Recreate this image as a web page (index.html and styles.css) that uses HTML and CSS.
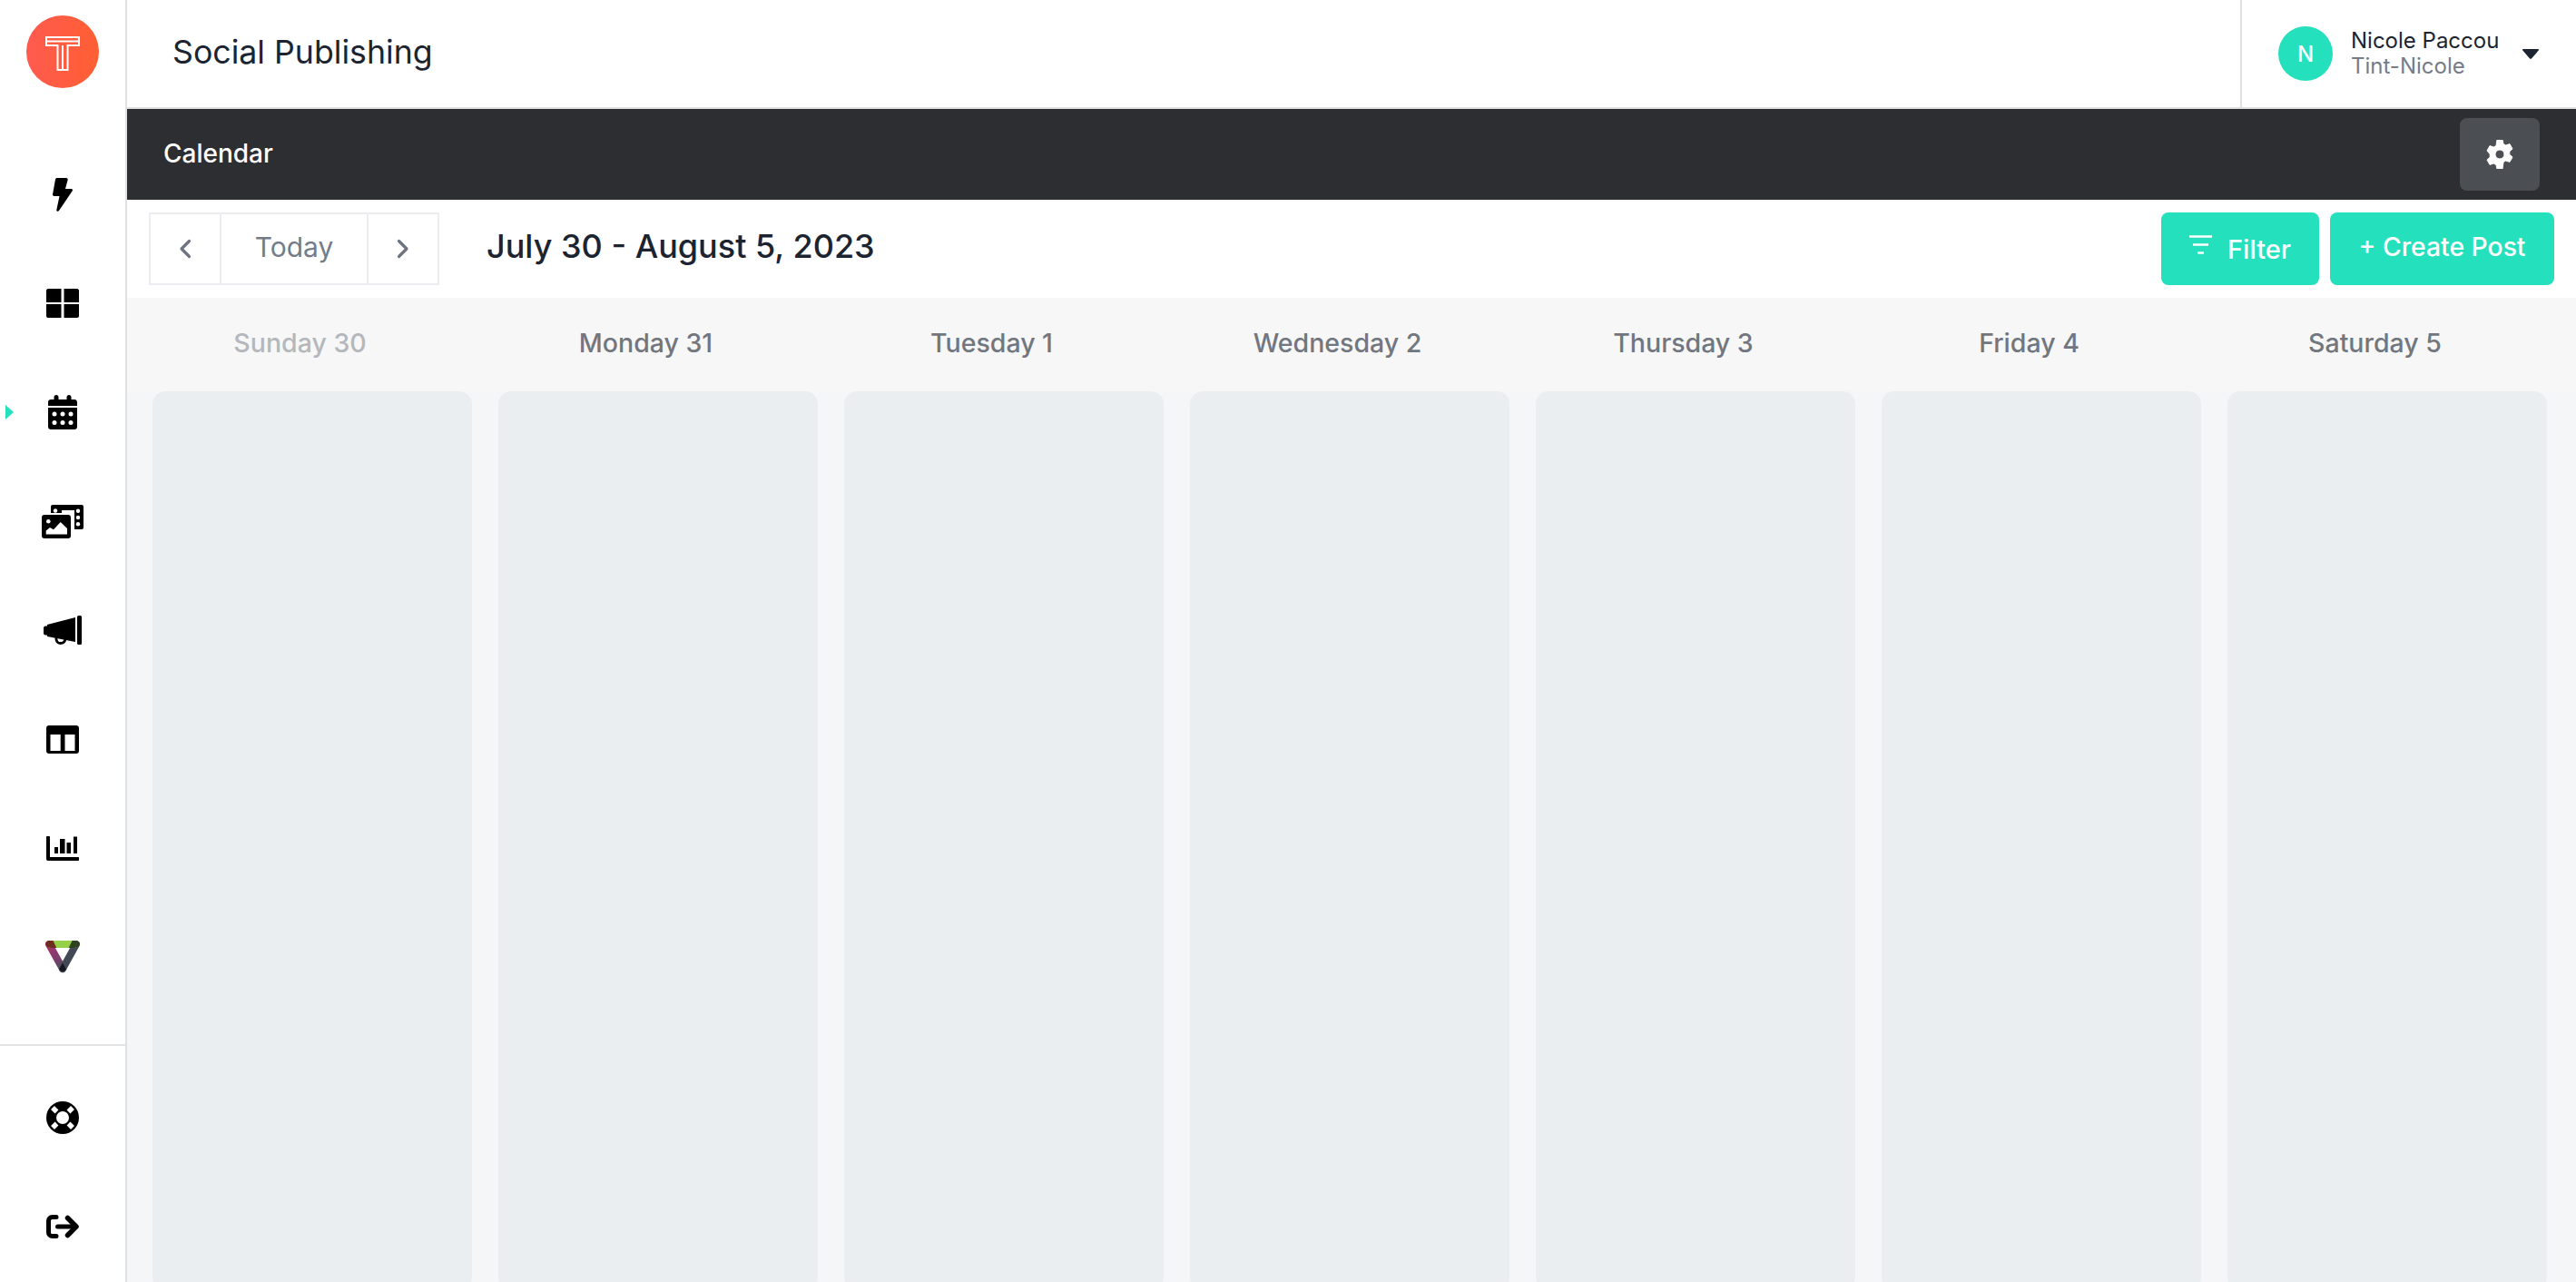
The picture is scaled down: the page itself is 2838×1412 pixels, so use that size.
FILE: index.html
```html
<!DOCTYPE html>
<html lang="en">
<head>
<meta charset="utf-8">
<title>Social Publishing</title>
<link rel="stylesheet" href="styles.css">
</head>
<body>
<div class="app">
  <aside class="sidebar">
    <div class="logo-wrap">
      <svg class="logo" viewBox="0 0 80 80" width="80" height="80">
        <defs><linearGradient id="lg" x1="0" y1="0" x2="1" y2="0"><stop offset="0" stop-color="#ff5a50"/><stop offset="1" stop-color="#ff5f33"/></linearGradient></defs>
        <circle cx="40" cy="40" r="40" fill="url(#lg)"/>
        <path d="M22 24h36v9H45.500v27h-11V33H22z" fill="none" stroke="#fff" stroke-width="2"/>
        <path d="M22 28.500h36M40 33v27" fill="none" stroke="#fff" stroke-width="2"/>
      </svg>
    </div>
    <nav class="nav">
      <a class="nav-item"><svg width="22" height="37" viewBox="0 0 22 37"><path d="M5 0h10c1 0 2 1 1.600 2.200L14 12h6.500c1.200 0 1.800 1.200 1.200 2.200L7 36c-.7 1.300-3 .8-2.700-.8L7.500 20H1.600C.6 20-.1 19.200 0 18.200L3 1.500C3.200.6 4 0 5 0z" fill="#000"/></svg></a>
      <a class="nav-item"><svg width="36" height="32" viewBox="0 0 36 32"><path d="M2 0h14.500v15H0V2C0 1 1 0 2 0zM19.500 0H34c1 0 2 1 2 2v13H19.500zM0 17h16.500v15H2c-1 0-2-1-2-2zM19.500 17H36v13c0 1-1 2-2 2H19.500z" fill="#000"/></svg></a>
      <a class="nav-item active"><svg width="32" height="38" viewBox="0 0 32 38"><path d="M9 0c1.500 0 2.500 1 2.500 2.500V5h9V2.500C20.500 1 21.500 0 23 0s2.500 1 2.500 2.500V5H29c1.700 0 3 1.300 3 3v4H0V8c0-1.700 1.300-3 3-3h3.500V2.500C6.500 1 7.500 0 9 0z" fill="#000"/><path d="M0 14h32v21c0 1.700-1.300 3-3 3H3c-1.700 0-3-1.300-3-3z" fill="#000"/><g fill="#fff"><circle cx="7" cy="21" r="2.500"/><circle cx="16" cy="21" r="2.500"/><circle cx="25" cy="21" r="2.500"/><circle cx="7" cy="30.500" r="2.500"/><circle cx="16" cy="30.500" r="2.500"/><circle cx="25" cy="30.500" r="2.500"/></g></svg></a>
      <a class="nav-item"><svg width="46" height="37" viewBox="0 0 46 37"><path d="M12 0h32a2 2 0 0 1 2 2v23a2 2 0 0 1-2 2h-8V6H22v3H10V2a2 2 0 0 1 2-2z" fill="#000"/><g fill="#fff"><circle cx="15" cy="6.500" r="2.200"/><circle cx="40" cy="6.700" r="2.200"/><circle cx="40" cy="14" r="2.200"/><circle cx="40" cy="21.300" r="2.200"/></g><rect x="0" y="11" width="32" height="26" rx="3" fill="#000"/><circle cx="7.300" cy="18.300" r="2.300" fill="#fff"/><path d="M4.700 32.500V28.500L9 25l4 2.200L20.700 19l7.300 7v6.500z" fill="#fff"/></svg></a>
      <a class="nav-item"><svg width="42" height="32" viewBox="0 0 42 32"><rect x="37" y="0" width="5" height="32" rx="1.500" fill="#000"/><path d="M35 2v27L4 23v-1.500H2c-1 0-2-1-2-2v-6c0-1 1-2 2-2h2V10z" fill="#000"/><path d="M14 23.500c-.6 4.500 1.400 7 4.500 7s5-2 5.500-4.500" fill="none" stroke="#000" stroke-width="2.800"/></svg></a>
      <a class="nav-item"><svg width="36" height="31" viewBox="0 0 36 31"><path fill-rule="evenodd" d="M3 0h30c1.700 0 3 1.300 3 3v25c0 1.700-1.300 3-3 3H3c-1.700 0-3-1.300-3-3V3c0-1.700 1.300-3 3-3zM4.500 10v18h11.200V10zM20.500 10v18h11V10z" fill="#000"/></svg></a>
      <a class="nav-item"><svg width="36" height="27" viewBox="0 0 36 27"><path d="M0 1c0-.6.400-1 1-1h2c.6 0 1 .4 1 1v22h31c.6 0 1 .4 1 1v2c0 .6-.4 1-1 1H2c-1.100 0-2-.9-2-2zM9 12h4v7H9zM15 3h5.500v16H15zM22.500 7H27v12h-4.500zM30 .5h4V19h-4z" fill="#000"/></svg></a>
      <a class="nav-item"><svg width="38" height="36" viewBox="0 0 38 36">
        <defs><linearGradient id="vl" gradientUnits="userSpaceOnUse" x1="4" y1="4" x2="19" y2="31"><stop offset="0" stop-color="#a8336f"/><stop offset=".6" stop-color="#7a3d6c"/><stop offset="1" stop-color="#4a5060"/></linearGradient></defs>
        <path d="M4 4L19 31" fill="none" stroke="url(#vl)" stroke-width="8" stroke-linecap="round"/>
        <path d="M34 4L19 31" fill="none" stroke="#434855" stroke-width="8" stroke-linecap="round"/>
        <path d="M4 4H34" fill="none" stroke="#96d048" stroke-width="8"/>
        <path d="M4 0h4.500l3.800 8H5.500l-4-1.500C-.8 4.500 1 0 4 0z" fill="#6d2d1e"/>
        <path d="M34 0h-4.500l-3.800 8h6.800l4-1.500C38.800 4.500 37 0 34 0z" fill="#2e4220"/>
        <path d="M19 24.500l-3.800 7a4.200 4.200 0 0 0 7.600 0z" fill="#14171d"/>
      </svg></a>
    </nav>
    <div class="side-foot">
      <a class="nav-item"><svg width="36" height="36" viewBox="0 0 36 36"><circle cx="18" cy="18" r="18" fill="#000"/><circle cx="18" cy="18" r="7" fill="#fff"/><g stroke="#fff" stroke-width="5.500"><path d="M7 7l4.500 4.500M29 7l-4.500 4.500M7 29l4.500-4.500M29 29l-4.500-4.500"/></g></svg></a>
      <a class="nav-item"><svg width="36" height="26" viewBox="0 0 36 26"><path d="M11 2.500H6.500a4 4 0 0 0-4 4v13a4 4 0 0 0 4 4H11" fill="none" stroke="#000" stroke-width="5" stroke-linecap="round"/><path d="M12.500 13H31" fill="none" stroke="#000" stroke-width="5" stroke-linecap="round"/><path d="M23.500 3.500L33 13l-9.500 9.500" fill="none" stroke="#000" stroke-width="5.500" stroke-linecap="round" stroke-linejoin="round"/></svg></a>
    </div>
  </aside>
  <main class="main">
    <header class="topbar">
      <h1 class="app-title">Social Publishing</h1>
      <div class="user">
        <span class="avatar">N</span>
        <div class="user-text">
          <span class="user-name">Nicole Paccou</span>
          <span class="user-org">Tint-Nicole</span>
        </div>
        <svg class="caret" width="18" height="11" viewBox="0 0 18 11"><path d="M1 0h16c.9 0 1.300 1 .7 1.600L10 10.400c-.5.600-1.500.600-2 0L.3 1.600C-.3 1 .1 0 1 0z" fill="#1b2430"/></svg>
      </div>
    </header>
    <div class="subbar">
      <span class="subbar-title">Calendar</span>
      <button class="gear-btn"><svg width="30" height="32" viewBox="0 0 30 32"><path fill-rule="evenodd" d="M12 0h6l1 4.500c1 .4 1.900.9 2.700 1.500L26 4.600l3 5.300-3.300 3c.2 1 .2 2.200 0 3.200l3.300 3-3 5.300-4.300-1.400c-.8.600-1.700 1.100-2.700 1.500L18 32h-6l-1-4.500c-1-.4-1.900-.9-2.700-1.500L4 27.400l-3-5.300 3.300-3c-.2-1-.2-2.200 0-3.200L1 12 4 6.600l4.300 1.400c.8-.6 1.700-1.100 2.700-1.500zM15 11a5 5 0 1 0 0 10 5 5 0 0 0 0-10z" fill="#fff" stroke="#fff" stroke-width="1" stroke-linejoin="round"/></svg></button>
    </div>
    <div class="toolbar">
      <div class="pager">
        <button class="pager-arrow"><svg width="14" height="22" viewBox="0 0 14 22"><path d="M11.500 2.500L3 11l8.500 8.500" fill="none" stroke="#6d7480" stroke-width="3.200" stroke-linecap="round" stroke-linejoin="round"/></svg></button>
        <button class="pager-today">Today</button>
        <button class="pager-arrow"><svg width="14" height="22" viewBox="0 0 14 22"><path d="M2.500 2.500L11 11l-8.500 8.500" fill="none" stroke="#6d7480" stroke-width="3.200" stroke-linecap="round" stroke-linejoin="round"/></svg></button>
      </div>
      <h2 class="range">July 30 - August 5, 2023</h2>
      <div class="actions">
        <button class="btn btn-filter"><svg class="filter-icon" width="26" height="22" viewBox="0 0 26 22"><path d="M0 1.500h25M4 10.500h17M9 19.500h7" stroke="#fff" stroke-width="2.500" fill="none"/></svg><span>Filter</span></button>
        <button class="btn btn-create">+ Create Post</button>
      </div>
    </div>
    <section class="calendar">
      <div class="day-heads">
        <div class="day-head past">Sunday 30</div>
        <div class="day-head">Monday 31</div>
        <div class="day-head">Tuesday 1</div>
        <div class="day-head">Wednesday 2</div>
        <div class="day-head">Thursday 3</div>
        <div class="day-head">Friday 4</div>
        <div class="day-head">Saturday 5</div>
      </div>
      <div class="day-cols">
        <div class="day-col"></div><div class="day-col"></div><div class="day-col"></div><div class="day-col"></div><div class="day-col"></div><div class="day-col"></div><div class="day-col"></div>
      </div>
    </section>
  </main>
</div>
</body>
</html>
```

FILE: styles.css
```css
* { box-sizing: border-box; }
html, body { margin: 0; height: 100%; overflow: hidden; }
body { font-family: Inter, "Noto Sans", sans-serif; color: #1b2430; background: #fff; }
button { font: inherit; border: 0; padding: 0; cursor: pointer; }
.app { display: flex; width: 2838px; height: 1412px; overflow: hidden; }

.sidebar { width: 140px; flex: none; border-right: 2px solid #dfe0e2; display: flex; flex-direction: column; background: #fff; }
.logo-wrap { height: 154px; padding-top: 17px; display: flex; justify-content: center; }
.logo { display: block; }
.nav { display: flex; flex-direction: column; height: 998px; border-bottom: 2px solid #e2e3e5; }
.nav-item { height: 120px; flex: none; display: flex; align-items: center; justify-content: center; position: relative; }
.nav-item.active::before { content: ""; position: absolute; left: 6px; top: 52px; border-left: 9px solid #25e0bd; border-top: 8px solid transparent; border-bottom: 8px solid transparent; }
.side-foot { display: flex; flex-direction: column; padding-top: 19px; }

.main { flex: 1; min-width: 0; display: flex; flex-direction: column; }
.topbar { height: 120px; flex: none; border-bottom: 2px solid #dfe0e2; display: flex; align-items: stretch; justify-content: space-between; padding-left: 50px; }
.app-title { margin: 0; align-self: center; font-size: 35.7px; font-weight: 400; color: #1b2430; padding-bottom: 4px; }
.user { width: 370px; border-left: 2px solid #dfe0e2; display: flex; align-items: center; padding-left: 40px; }
.avatar { width: 60px; height: 60px; border-radius: 50%; background: #25e0bd; color: #fff; font-size: 24px; font-weight: 500; display: flex; align-items: center; justify-content: center; flex: none; }
.user-text { margin-left: 20px; display: flex; flex-direction: column; width: 189px; line-height: 28px; }
.user-name { font-size: 24px; color: #1b2430; }
.user-org { font-size: 24px; color: #767c87; }
.caret { flex: none; }

.subbar { height: 100px; flex: none; background: #2d2e32; display: flex; align-items: center; justify-content: space-between; padding: 0 40px 0 40px; }
.subbar-title { color: #fff; font-size: 28px; font-weight: 500; padding-bottom: 3px; }
.gear-btn { width: 88px; height: 80px; border-radius: 8px; background: #4b4e52; display: flex; align-items: center; justify-content: center; }

.toolbar { height: 108px; flex: none; display: flex; align-items: flex-start; padding: 14px 24px 0; background: #fff; }
.pager { display: flex; height: 80px; border: 2px solid #ebedf1; background: #fff; }
.pager-arrow { width: 76px; background: #fff; display: flex; align-items: center; justify-content: center; }
.pager-today { width: 164px; background: #fff; border-left: 2px solid #ebedf1; border-right: 2px solid #ebedf1; color: #767c87; font-size: 30px; padding-bottom: 4px; }
.range { margin: 0 0 0 52px; height: 80px; line-height: 74px; font-size: 36px; font-weight: 500; color: #1b2430; }
.actions { margin-left: auto; display: flex; gap: 12px; }
.btn { height: 80px; border-radius: 8px; background: #25e0bd; color: #fff; font-size: 29px; font-weight: 500; display: flex; align-items: center; justify-content: center; }
.btn-filter { width: 174px; gap: 16px; }
.filter-icon { margin-bottom: 8px; }
.btn-create { width: 247px; padding-bottom: 4px; font-size: 28.300px; }

.calendar { flex: 1; min-height: 0; background: #f7f7f7; }
.day-heads { display: grid; grid-template-columns: repeat(7, 381px); height: 103px; padding-bottom: 4px; align-items: center; }
.day-head { text-align: center; font-size: 28.500px; font-weight: 500; color: #71767f; }
.day-head.past { color: #b4b7bc; }
.day-cols { display: grid; grid-template-columns: repeat(7, 1fr); column-gap: 29px; padding: 0 32px 0 28px; height: 990px; background: #f5f6f8; }
.day-col { background: #ebeef1; border-radius: 14px; }
```
